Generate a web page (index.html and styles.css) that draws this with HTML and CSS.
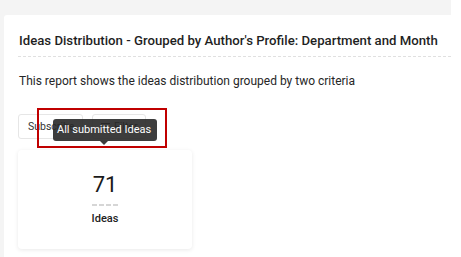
FILE: index.html
```html
<!DOCTYPE html>
<html>
<head>
<meta charset="utf-8">
<link rel="stylesheet" href="styles.css">
</head>
<body>
<div class="page">
  <div class="card">
    <div class="header">Ideas Distribution - Grouped by Author's Profile: Department and Month</div>
    <p class="desc">This report shows the ideas distribution grouped by two criteria</p>
    <div class="actions">
      <button class="btn btn-sub">Subscribe</button>
      <button class="btn btn-filter">
        <svg class="ficon" width="9" height="7" viewBox="0 0 9 7"><path d="M0 0.5h9M1.5 3.5h6M3 6.5h3" stroke="#444" stroke-width="1"/></svg>
        Filter
      </button>
      <div class="tooltip">All submitted Ideas</div>
      <div class="highlight"></div>
    </div>
    <div class="stat">
      <div class="num">71</div>
      <div class="dashes"></div>
      <div class="label">Ideas</div>
    </div>
  </div>
</div>
</body>
</html>
```
FILE: styles.css
```css
html, body { margin: 0; padding: 0; background: #fff; }
body { font-family: Roboto, "Noto Sans", sans-serif; color: #212121; }
.page {
  width: 451px;
  height: 257px;
  background: #f4f4f4;
  padding: 15px 0 0 4px;
  box-sizing: border-box;
  overflow: hidden;
}
.card {
  background: #fff;
  height: 100%;
  padding-left: 14px;
  border-radius: 3px 0 0 0;
}
.header {
  font-size: 13.2px;
  font-weight: 500;
  line-height: 20px;
  padding: 16px 0 5px 1px;
  border-bottom: 1px dashed #e0e0e0;
  white-space: nowrap;
  color: #1f1f1f;
}
.desc {
  margin: 15px 0 0 1px;
  font-size: 12px;
  line-height: 18px;
  color: #262626;
}
.actions {
  position: relative;
  display: flex;
  gap: 9px;
  margin-top: 24px;
  height: 25px;
}
.btn {
  font-family: inherit;
  font-size: 10.5px;
  color: #333;
  background: #fff;
  border: 1px solid #e6e6e6;
  border-radius: 3px;
  height: 25px;
  display: flex;
  align-items: center;
  gap: 4px;
  box-sizing: border-box;
}
.btn-sub { width: 65px; padding: 0 0 0 9px; }
.btn-filter { width: 54px; padding: 0 0 0 8px; }
.ficon { display: block; }
.tooltip {
  position: absolute;
  left: 35px;
  top: 5px;
  width: 104px;
  height: 22px;
  box-sizing: border-box;
  background: rgba(40,40,40,0.9);
  color: #fff;
  font-size: 11px;
  line-height: 22px;
  padding-left: 4px;
  border-radius: 3px;
  white-space: nowrap;
}
.tooltip::after {
  content: "";
  position: absolute;
  left: 47px;
  bottom: -4px;
  border-left: 4px solid transparent;
  border-right: 4px solid transparent;
  border-top: 4px solid rgba(40,40,40,0.9);
}
.highlight {
  position: absolute;
  left: 19px;
  top: -6px;
  width: 130px;
  height: 40px;
  box-sizing: border-box;
  border: 2px solid #c00000;
}
.stat {
  margin-top: 11px;
  width: 174px;
  height: 99px;
  box-sizing: border-box;
  background: #fff;
  border-radius: 4px;
  box-shadow: 0 1px 4px rgba(0,0,0,0.09);
  display: flex;
  flex-direction: column;
  align-items: center;
  padding-top: 22px;
}
.num {
  font-size: 22px;
  line-height: 26px;
  color: #1a1a1a;
}
.dashes {
  width: 26px;
  height: 2px;
  margin-top: 6px;
  background: repeating-linear-gradient(to right, #d6d6d6 0 5px, transparent 5px 7px);
}
.label {
  font-size: 11px;
  font-weight: 500;
  line-height: 16px;
  margin-top: 5px;
  color: #222;
}
```
